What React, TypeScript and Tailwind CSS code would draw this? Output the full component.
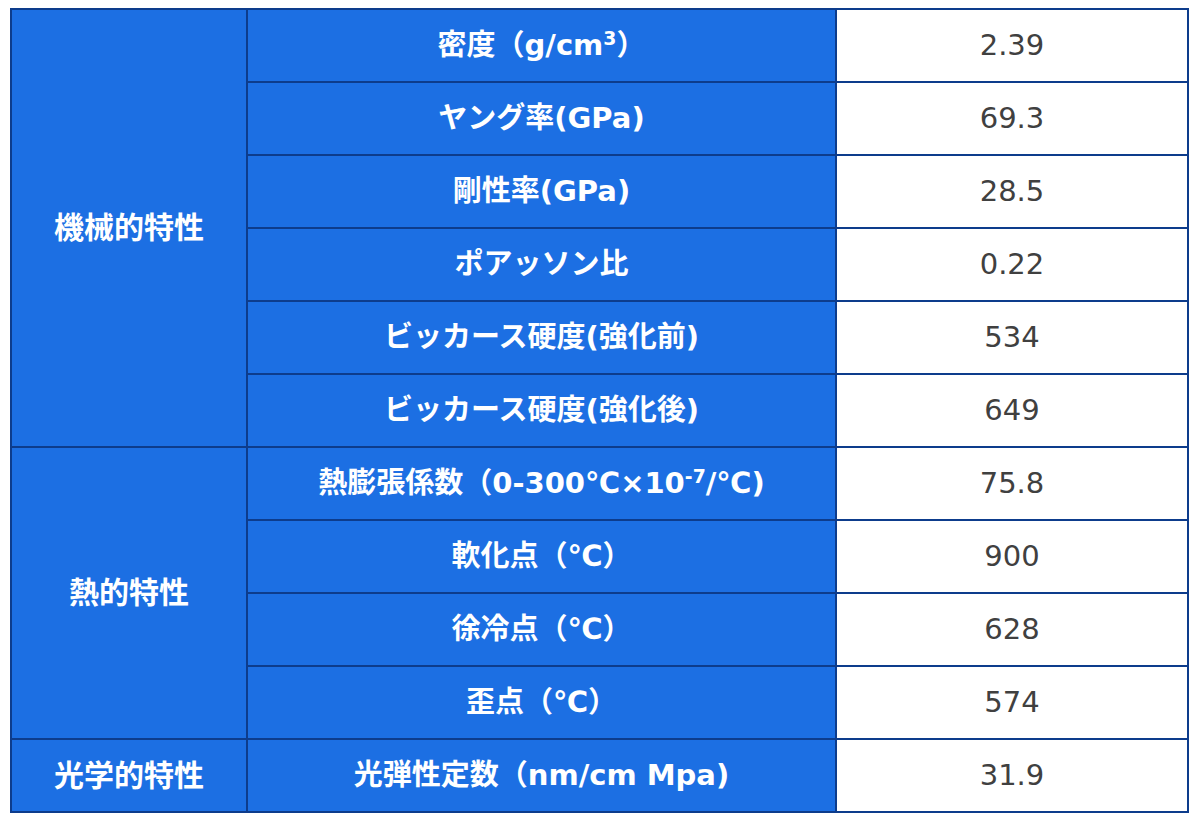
const sup = "text-[0.65em] relative -top-[0.55em] leading-none";

const groups = [
  {
    name: "機械的特性",
    rows: [
      { label: <>密度（g/cm<span className={sup}>3</span>）</>, value: "2.39" },
      { label: "ヤング率(GPa)", value: "69.3" },
      { label: "剛性率(GPa)", value: "28.5" },
      { label: "ポアッソン比", value: "0.22" },
      { label: "ビッカース硬度(強化前)", value: "534" },
      { label: "ビッカース硬度(強化後)", value: "649" },
    ],
  },
  {
    name: "熱的特性",
    rows: [
      { label: <>熱膨張係数（0-300℃×10<span className={sup}>-7</span>/℃)</>, value: "75.8" },
      { label: "軟化点（℃）", value: "900" },
      { label: "徐冷点（℃）", value: "628" },
      { label: "歪点（℃）", value: "574" },
    ],
  },
  {
    name: "光学的特性",
    rows: [{ label: "光弾性定数（nm/cm Mpa)", value: "31.9" }],
  },
];

export default function App() {
  return (
    <div className="w-[1200px] h-[823px] bg-white pt-[8px] pl-[10px]">
      <table className="border-collapse w-[1179px] font-['DejaVu_Sans','Noto_Sans_CJK_JP',sans-serif]">
        <tbody>
          {groups.map((g) =>
            g.rows.map((r, i) => (
              <tr key={g.name + i} className="h-[73px]">
                {i === 0 && (
                  <th
                    rowSpan={g.rows.length}
                    className="w-[236px] border-2 border-[#0d3c8c] bg-[#1c6fe3] text-white text-[30px] font-bold leading-none"
                  >
                    {g.name}
                  </th>
                )}
                <th className="w-[589px] border-2 border-[#0d3c8c] bg-[#1c6fe3] text-white text-[29px] font-bold leading-none">
                  {r.label}
                </th>
                <td className="border-2 border-[#0d3c8c] bg-white text-center text-[#404040] text-[29px] leading-none">
                  {r.value}
                </td>
              </tr>
            ))
          )}
        </tbody>
      </table>
    </div>
  );
}
